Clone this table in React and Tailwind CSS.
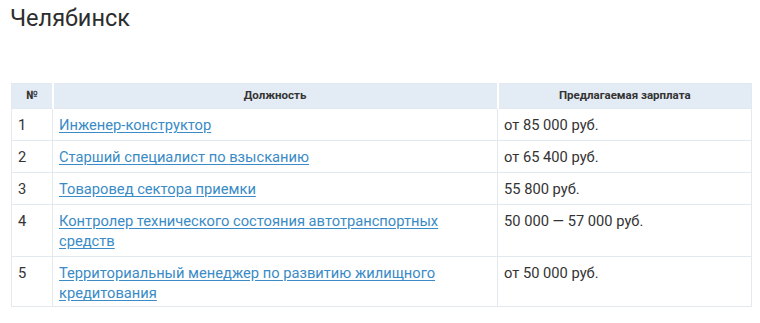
const rows = [
  { n: "1", title: "Инженер-конструктор", pay: "от 85 000 руб.", h: "h-[32px]" },
  { n: "2", title: "Старший специалист по взысканию", pay: "от 65 400 руб.", h: "h-[32px]" },
  { n: "3", title: "Товаровед сектора приемки", pay: "55 800 руб.", h: "h-[32px]" },
  { n: "4", title: "Контролер технического состояния автотранспортных средств", pay: "50 000 — 57 000 руб.", h: "h-[52px]" },
  { n: "5", title: "Территориальный менеджер по развитию жилищного кредитования", pay: "от 50 000 руб.", h: "h-[50px]" },
];

export default function App() {
  return (
    <div className="w-[760px] h-[323px] bg-white overflow-hidden font-['Roboto','Liberation_Sans',sans-serif] text-[#333]">
      <h1 className="pl-[10px] pt-[3px] text-[23.5px] leading-[30px] font-normal text-[#2d2d2d]">
        Челябинск
      </h1>

      <table className="ml-[11px] mt-[50px] w-[740px] border-collapse table-fixed border border-[#e4e9ef]">
        <colgroup>
          <col className="w-[41px]" />
          <col className="w-[445px]" />
          <col className="w-[254px]" />
        </colgroup>
        <thead>
          <tr className="h-[25px] bg-[#e3ebf4]">
            <th className="border-r-2 border-white text-[11.5px] font-bold text-[#333]">№</th>
            <th className="border-r-2 border-white text-[11.5px] font-bold text-[#333]">Должность</th>
            <th className="text-[11.5px] font-bold text-[#333]">Предлагаемая зарплата</th>
          </tr>
        </thead>
        <tbody>
          {rows.map((r) => (
            <tr key={r.n} className={`${r.h} border-t border-[#e4e9ef]`}>
              <td className="align-top pl-[6px] pt-[6px] text-[14.7px] leading-[20px] border-r border-[#e4e9ef]">{r.n}</td>
              <td className="align-top pl-[6px] pr-[38px] pt-[6px] text-[14.7px] leading-[20px] border-r border-[#e4e9ef]">
                <a href="#" className="text-[#3a8bc6] underline underline-offset-2">{r.title}</a>
              </td>
              <td className="align-top pl-[6px] pt-[6px] text-[14.7px] leading-[20px]">{r.pay}</td>
            </tr>
          ))}
        </tbody>
      </table>
    </div>
  );
}
